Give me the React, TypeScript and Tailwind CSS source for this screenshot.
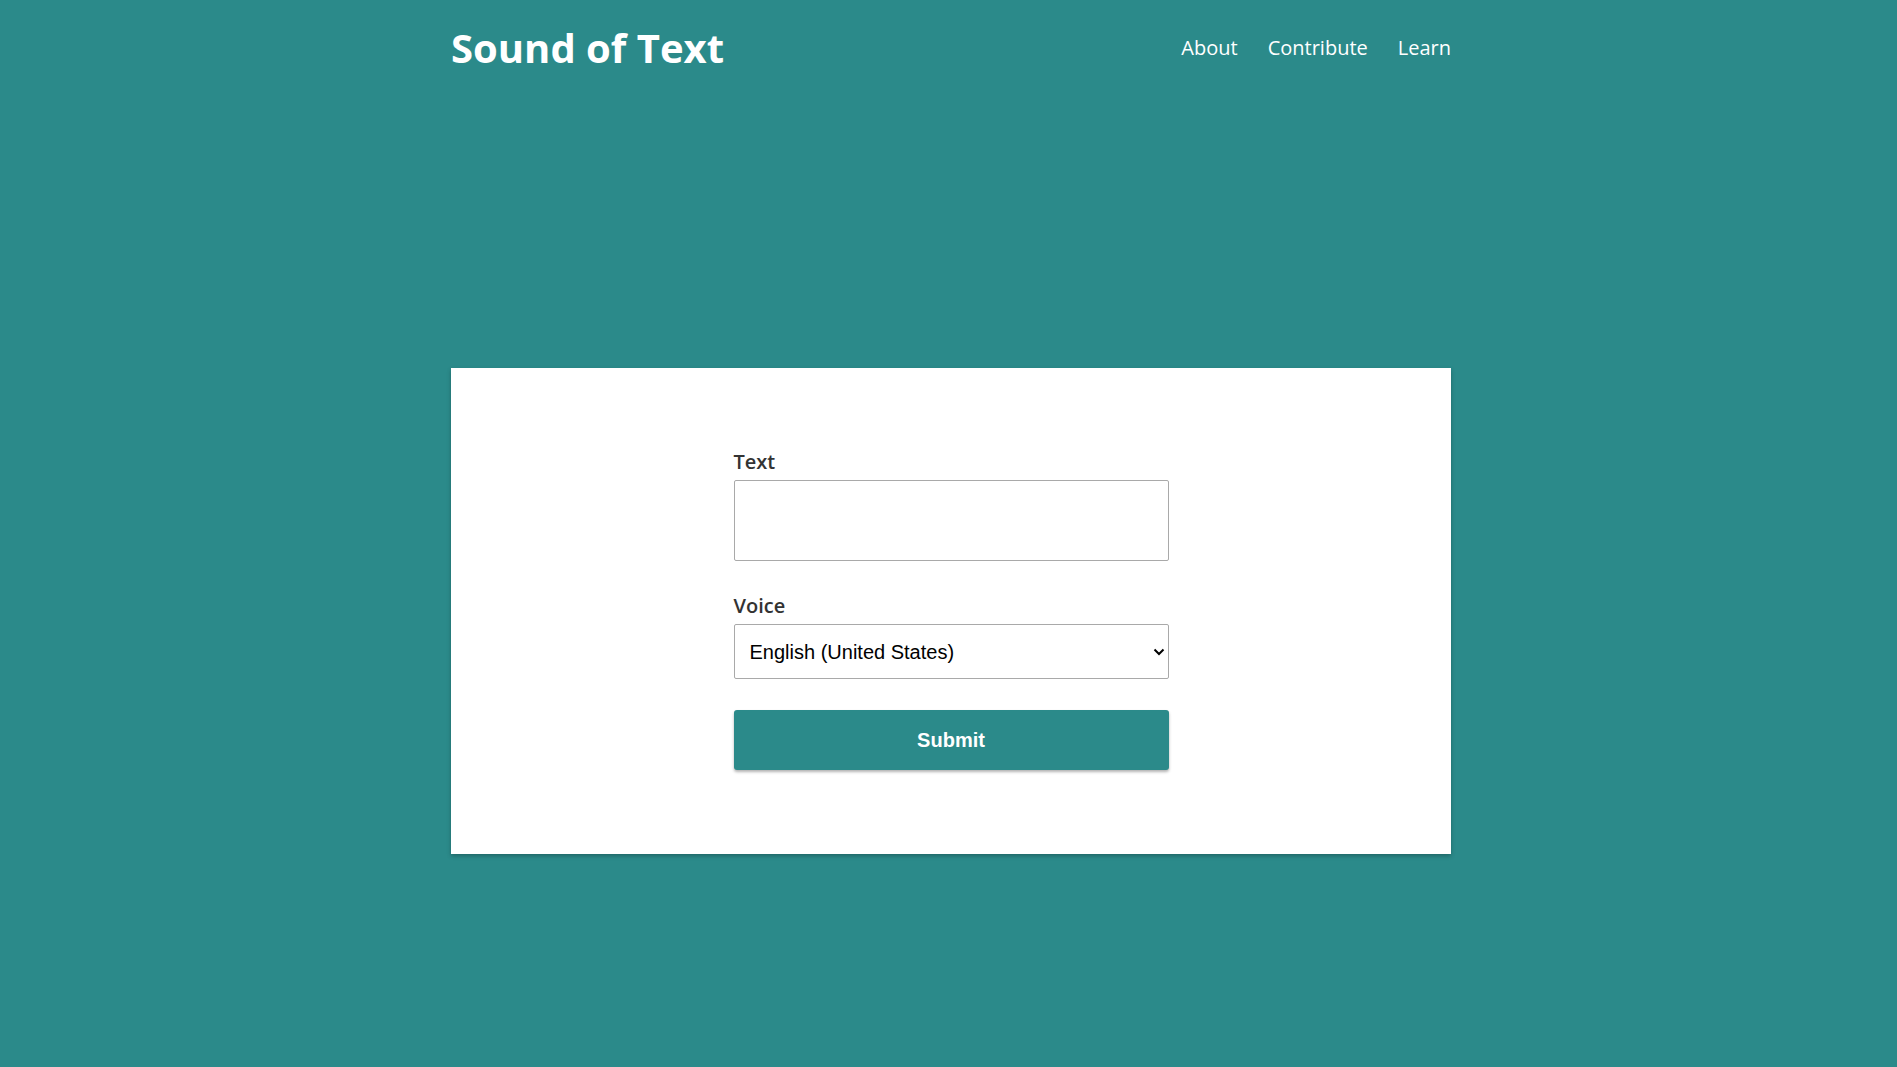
import React from "react";

export default function App() {
  return (
    <div className="min-h-[1067px] w-full bg-[#2b8a8a] pl-[5px] font-['Open_Sans',sans-serif]">
      <header className="mx-auto flex h-[96px] w-[1000px] items-center justify-between">
        <h1 className="text-[40px] font-bold leading-[1.2] text-white">Sound of Text</h1>
        <nav className="flex items-center gap-[30px] text-[20px] leading-[1.5] text-white">
          <a href="#">About</a>
          <a href="#">Contribute</a>
          <a href="#">Learn</a>
        </nav>
      </header>
      <main className="mx-auto mt-[272px] w-[1000px] bg-white pt-[79px] pb-[84px] shadow-[0_2px_4px_rgba(0,0,0,0.25)]">
        <form className="mx-auto flex w-[435px] flex-col" onSubmit={(e) => e.preventDefault()}>
          <label className="text-[20px] font-semibold leading-[1.5] text-[#333]">Text</label>
          <textarea className="mt-[3px] h-[81px] w-full resize-none rounded-[2px] border border-[#a9a9a9] bg-white px-3 py-2 font-['Liberation_Sans',Arial,sans-serif] text-[20px] outline-none" />
          <label className="mt-[30px] text-[20px] font-semibold leading-[1.5] text-[#333]">Voice</label>
          <div className="relative mt-[3px]">
            <select className="h-[55px] w-full appearance-none rounded-[2px] border border-[#a9a9a9] bg-white pl-[15px] font-['Liberation_Sans',Arial,sans-serif] text-[20px] text-black outline-none">
              <option>English (United States)</option>
            </select>
            <svg
              className="pointer-events-none absolute right-[4px] top-1/2 -translate-y-1/2"
              width="12"
              height="8"
              viewBox="0 0 12 8"
              fill="none"
            >
              <path d="M1.5 1.5L6 6L10.5 1.5" stroke="#000" strokeWidth="2" />
            </svg>
          </div>
          <button
            type="submit"
            className="mt-[31px] h-[60px] w-full rounded-[3px] bg-[#2b8a8a] font-['Liberation_Sans',Arial,sans-serif] text-[20px] font-bold text-white shadow-[0_2px_3px_rgba(0,0,0,0.3)]"
          >
            Submit
          </button>
        </form>
      </main>
    </div>
  );
}
